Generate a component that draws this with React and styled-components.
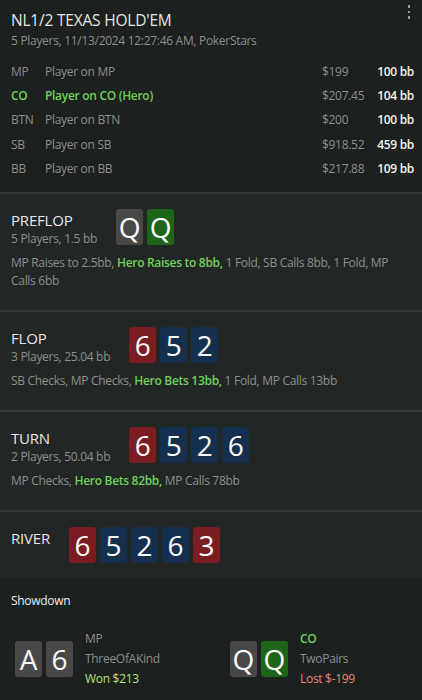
import styled, { createGlobalStyle } from "styled-components";

const GlobalStyle = createGlobalStyle`
  html, body {
    margin: 0;
    padding: 0;
    background: #222725;
  }
  body {
    font-family: "Open Sans", "Noto Sans", sans-serif;
    letter-spacing: -0.3px;
    -webkit-font-smoothing: antialiased;
  }
`;

const Page = styled.div`
  width: 422px;
  height: 700px;
  display: flex;
  flex-direction: column;
  background: #222725;
  overflow: hidden;
`;

const Header = styled.div`
  position: relative;
  background: #1c201e;
  padding: 9px 8px 12px 11px;
  border-bottom: 2px solid #363b39;
`;

const Title = styled.div`
  font-size: 15.5px;
  line-height: 22px;
  letter-spacing: -0.2px;
  color: #e6e6e6;
`;

const SubTitle = styled.div`
  font-size: 12px;
  line-height: 18px;
  color: #8b8f8d;
  margin-top: 1px;
  margin-bottom: 9px;
`;

const MenuDots = styled.div`
  position: absolute;
  top: 5px;
  right: 12px;
  display: flex;
  flex-direction: column;
  gap: 3px;
  span {
    width: 2.5px;
    height: 2.5px;
    background: #9a9d9b;
  }
`;

const PlayerRow = styled.div`
  display: grid;
  grid-template-columns: 34px 1fr 48px 44px;
  align-items: center;
  height: 24.3px;
  font-size: 12px;
  color: ${(p) => (p.$hero ? "#6fcf5b" : "#8b8f8d")};
  font-weight: ${(p) => (p.$hero ? 600 : 400)};
`;

const Stack = styled.span`
  color: #8b8f8d;
  font-weight: 400;
`;

const BB = styled.span`
  color: #f2f2f2;
  font-weight: 600;
  text-align: right;
`;

const Section = styled.div`
  padding: 15px 11px 14px;
  border-bottom: ${(p) => (p.$last ? "none" : "2px solid #363b39")};
`;

const StreetHead = styled.div`
  display: flex;
  align-items: flex-start;
  gap: 19px;
`;

const StreetInfo = styled.div`
  padding-top: 1px;
`;

const StreetName = styled.div`
  font-size: 15px;
  line-height: 20px;
  letter-spacing: -0.2px;
  color: #e6e6e6;
`;

const StreetSub = styled.div`
  font-size: 12px;
  line-height: 18px;
  color: #8b8f8d;
`;

const Cards = styled.div`
  display: flex;
  gap: 4px;
`;

const cardColors = {
  gray: "#484848",
  green: "#1d6519",
  red: "#7a1c20",
  blue: "#15304e",
};

const Card = styled.div`
  width: 27px;
  height: 36px;
  border-radius: 3px;
  background: ${(p) => cardColors[p.$c]};
  color: #fafafa;
  font-size: 28px;
  line-height: 36px;
  letter-spacing: 0;
  text-align: center;
`;

const Actions = styled.div`
  margin: 6px 0 6px;
  font-size: 12px;
  line-height: 18px;
  color: #8b8f8d;
`;

const Hero = styled.span`
  color: #6fcf5b;
  font-weight: 600;
`;

const Showdown = styled.div`
  flex: 1;
  background: #1c201e;
  padding: 15px 11px 0 11px;
`;

const ShowTitle = styled.div`
  font-size: 12px;
  line-height: 18px;
  color: #ececec;
`;

const Hands = styled.div`
  display: flex;
  margin-top: 19px;
  padding-left: 4px;
`;

const Hand = styled.div`
  display: flex;
  align-items: center;
  gap: 12px;
  width: 215px;
  flex-shrink: 0;
`;

const HandInfo = styled.div`
  display: flex;
  flex-direction: column;
  font-size: 12px;
  line-height: 20px;
  color: #8b8f8d;
`;

const Seat = styled.span`
  color: ${(p) => (p.$hero ? "#6fcf5b" : "#8b8f8d")};
  font-weight: ${(p) => (p.$hero ? 600 : 400)};
`;

const Result = styled.span`
  color: ${(p) => (p.$won ? "#b3e27a" : "#ec8576")};
`;

const players = [
  { pos: "MP", name: "Player on MP", stack: "$199", bb: "100 bb" },
  { pos: "CO", name: "Player on CO (Hero)", stack: "$207.45", bb: "104 bb", hero: true },
  { pos: "BTN", name: "Player on BTN", stack: "$200", bb: "100 bb" },
  { pos: "SB", name: "Player on SB", stack: "$918.52", bb: "459 bb" },
  { pos: "BB", name: "Player on BB", stack: "$217.88", bb: "109 bb" },
];

const board = [
  ["6", "red"],
  ["5", "blue"],
  ["2", "blue"],
  ["6", "blue"],
  ["3", "red"],
];

function CardRow({ cards }) {
  return (
    <Cards>
      {cards.map(([v, c], i) => (
        <Card key={i} $c={c}>
          {v}
        </Card>
      ))}
    </Cards>
  );
}

export default function App() {
  return (
    <Page>
      <GlobalStyle />
      <Header>
        <Title>NL1/2 TEXAS HOLD'EM</Title>
        <SubTitle>5 Players, 11/13/2024 12:27:46 AM, PokerStars</SubTitle>
        <MenuDots>
          <span />
          <span />
          <span />
        </MenuDots>
        {players.map((p) => (
          <PlayerRow key={p.pos} $hero={p.hero}>
            <span>{p.pos}</span>
            <span>{p.name}</span>
            <Stack>{p.stack}</Stack>
            <BB>{p.bb}</BB>
          </PlayerRow>
        ))}
      </Header>

      <Section>
        <StreetHead>
          <StreetInfo>
            <StreetName>PREFLOP</StreetName>
            <StreetSub>5 Players, 1.5 bb</StreetSub>
          </StreetInfo>
          <CardRow cards={[["Q", "gray"], ["Q", "green"]]} />
        </StreetHead>
        <Actions>
          MP Raises to 2.5bb, <Hero>Hero Raises to 8bb,</Hero> 1 Fold, SB Calls 8bb, 1 Fold, MP
          Calls 6bb
        </Actions>
      </Section>

      <Section>
        <StreetHead>
          <StreetInfo>
            <StreetName>FLOP</StreetName>
            <StreetSub>3 Players, 25.04 bb</StreetSub>
          </StreetInfo>
          <CardRow cards={board.slice(0, 3)} />
        </StreetHead>
        <Actions>
          SB Checks, MP Checks, <Hero>Hero Bets 13bb,</Hero> 1 Fold, MP Calls 13bb
        </Actions>
      </Section>

      <Section>
        <StreetHead>
          <StreetInfo>
            <StreetName>TURN</StreetName>
            <StreetSub>2 Players, 50.04 bb</StreetSub>
          </StreetInfo>
          <CardRow cards={board.slice(0, 4)} />
        </StreetHead>
        <Actions>
          MP Checks, <Hero>Hero Bets 82bb,</Hero> MP Calls 78bb
        </Actions>
      </Section>

      <Section $last>
        <StreetHead>
          <StreetInfo>
            <StreetName>RIVER</StreetName>
          </StreetInfo>
          <CardRow cards={board} />
        </StreetHead>
      </Section>

      <Showdown>
        <ShowTitle>Showdown</ShowTitle>
        <Hands>
          <Hand>
            <CardRow cards={[["A", "gray"], ["6", "gray"]]} />
            <HandInfo>
              <Seat>MP</Seat>
              <span>ThreeOfAKind</span>
              <Result $won>Won $213</Result>
            </HandInfo>
          </Hand>
          <Hand>
            <CardRow cards={[["Q", "gray"], ["Q", "green"]]} />
            <HandInfo>
              <Seat $hero>CO</Seat>
              <span>TwoPairs</span>
              <Result>Lost $-199</Result>
            </HandInfo>
          </Hand>
        </Hands>
      </Showdown>
    </Page>
  );
}
